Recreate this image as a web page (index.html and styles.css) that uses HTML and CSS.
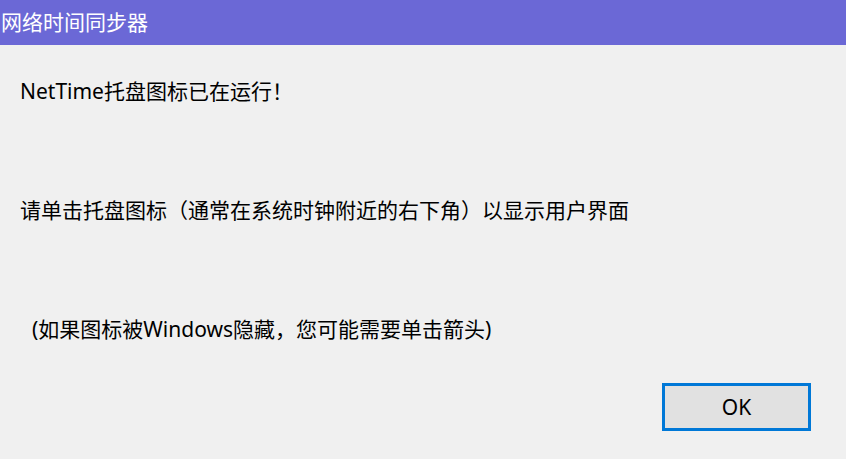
FILE: index.html
```html
<!DOCTYPE html>
<html lang="zh-CN">
<head>
  <meta charset="UTF-8">
  <meta name="viewport" content="width=device-width, initial-scale=1">
  <title>网络时间同步器</title>
  <link rel="stylesheet" href="styles.css">
</head>
<body>

  <div class="titlebar">网络时间同步器</div>

  <div class="message">
    <p>NetTime托盘图标已在运行！</p>
    <p>请单击托盘图标（通常在系统时钟附近的右下角）以显示用户界面</p>
    <p class="note">(如果图标被Windows隐藏，您可能需要单击箭头)</p>
  </div>

  <div class="button-area">
    <button class="btn btn-ok">OK</button>
  </div>

</body>
</html>
```

FILE: styles.css
```css
body {
  font-family: "Segoe UI", "Noto Sans", "Noto Sans CJK SC", sans-serif;
  background: #f0f0f0;
  color: #000;
  margin: 0;
  height: 100vh;
  overflow: hidden;
}
.titlebar {
  height: 45px;
  line-height: 44px;
  padding-left: 1px;
  background-color: #6b68d6;
  color: white;
  font-size: 21px;
}
.message {
  padding: 32px 20px 0;
}
.message p {
  margin: 0 0 91px;
  font-size: 21px;
  line-height: 28px;
  white-space: nowrap;
}
.message p.note {
  margin-bottom: 0;
  padding-left: 12px;
}
.button-area {
  display: flex;
  justify-content: flex-end;
  margin-top: 40px;
  padding-right: 35px;
}
.btn {
  font-family: inherit;
  font-size: 21px;
  cursor: pointer;
}
.btn-ok {
  width: 149px;
  height: 48px;
  border: 3px solid #0078d7;
  background-color: #e1e1e1;
  color: #000;
  padding: 0;
}
```
